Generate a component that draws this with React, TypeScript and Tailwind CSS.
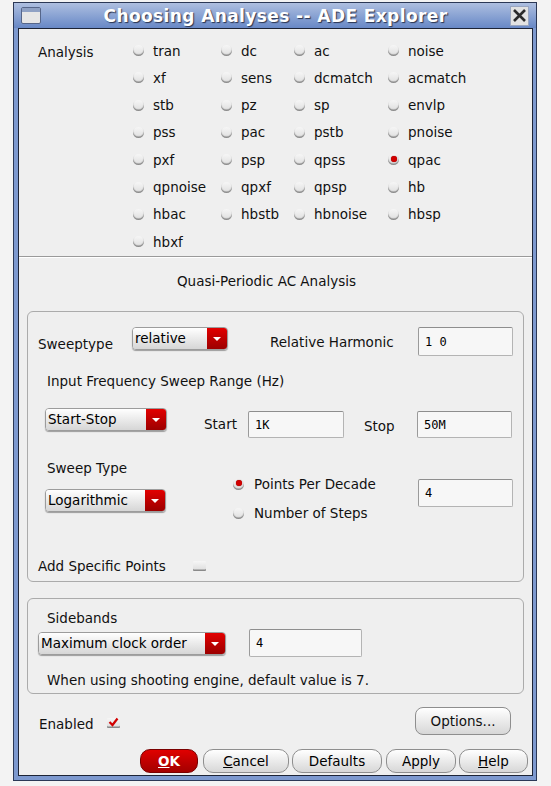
import React from 'react'

const analyses = [
  ['tran', 'dc', 'ac', 'noise'],
  ['xf', 'sens', 'dcmatch', 'acmatch'],
  ['stb', 'pz', 'sp', 'envlp'],
  ['pss', 'pac', 'pstb', 'pnoise'],
  ['pxf', 'psp', 'qpss', 'qpac'],
  ['qpnoise', 'qpxf', 'qpsp', 'hb'],
  ['hbac', 'hbstb', 'hbnoise', 'hbsp'],
  ['hbxf'],
]

function Radio({ on = false }: { on?: boolean }) {
  return (
    <div className="relative w-[11px] h-[11px] shrink-0 rounded-full bg-gradient-to-b from-[#f6f6f6] to-[#dedede] shadow-[inset_0_-1.5px_1px_#8a8a8a]">
      {on && (
        <div className="absolute left-[2.5px] top-[1.5px] w-[6px] h-[6px] rounded-full bg-[#d10000] shadow-[0_0_1px_#600]" />
      )}
    </div>
  )
}

function Dropdown({ label, w }: { label: string; w: string }) {
  return (
    <div
      className={`${w} h-[23px] flex rounded-[4px] border border-[#9c9c9c] shadow-[0_1px_1px_rgba(0,0,0,0.35)] overflow-hidden`}
    >
      <div className="flex-1 flex items-center pl-[2px] pb-[1px] bg-gradient-to-b from-[#ffffff] to-[#d6d6d6] text-black">
        {label}
      </div>
      <div className="w-[20px] flex items-center justify-center bg-gradient-to-b from-[#e20000] to-[#9c0000]">
        <div className="w-0 h-0 border-l-[4px] border-r-[4px] border-t-[4px] border-l-transparent border-r-transparent border-t-white" />
      </div>
    </div>
  )
}

function Field({ value, w, h = 'h-[28px]' }: { value: string; w: string; h?: string }) {
  return (
    <div
      className={`${w} ${h} flex items-center pl-[6px] rounded-[2px] border border-[#b4b4b4] border-t-[#8e8e8e] border-l-[#9a9a9a] bg-[#f7f7f7] font-['DejaVu_Sans_Mono',monospace] text-[12px] text-black`}
    >
      {value}
    </div>
  )
}

function Check({ on = false }: { on?: boolean }) {
  return (
    <div className="relative w-[13px] h-[10px] rounded-[1px] bg-gradient-to-b from-[#f6f6f6] to-[#dcdcdc] shadow-[inset_0_-1.5px_0_#8a8a8a]">
      {on && (
        <svg className="absolute left-[1px] top-[-1px]" width="11" height="10" viewBox="0 0 11 10">
          <path d="M1.5 5 L4.5 8 L9.5 1.5" fill="none" stroke="#d10000" strokeWidth="2.2" />
        </svg>
      )}
    </div>
  )
}

function Btn({ children, w, ml, red = false }: { children: React.ReactNode; w: string; ml: string; red?: boolean }) {
  return (
    <div
      className={`${w} ${ml} h-[24px] flex items-center justify-center rounded-[10px] border ${
        red
          ? 'border-[#7a0000] bg-gradient-to-b from-[#e00000] to-[#a30000] text-white font-bold'
          : 'border-[#8e8e8e] bg-gradient-to-b from-[#ffffff] to-[#d7d7d7] text-black'
      }`}
    >
      {children}
    </div>
  )
}

export default function App() {
  return (
    <div className="w-[551px] h-[786px] bg-[#f3f3f3] pt-[2px] pl-[13px] font-['DejaVu_Sans',sans-serif] text-[13.5px] text-[#111]">
      <div className="w-[524px] border border-[#2b3856] bg-[#7d99cf] flex flex-col">
        {/* title bar */}
        <div className="h-[25px] flex items-center px-[7px] bg-gradient-to-b from-[#aebfe0] to-[#6888c6]">
          <div className="w-[20px] h-[17px] rounded-[2px] border border-[#56668a] bg-[#e6e6e6] flex flex-col">
            <div className="h-[4px] bg-[#8fa1c4]" />
          </div>
          <div className="flex-1 text-center text-white font-bold text-[17px] leading-[20px] [text-shadow:1px_1px_1px_#2a3450] tracking-[0.4px]">
            Choosing Analyses -- ADE Explorer
          </div>
          <div className="w-[19px] h-[20px] bg-[#e2e2e2] border border-[#9aa6c0] flex items-center justify-center">
            <svg width="15" height="15" viewBox="0 0 15 15">
              <path d="M2 2 L13 13 M13 2 L2 13" stroke="#2a2a2a" strokeWidth="2.6" />
            </svg>
          </div>
        </div>

        {/* content */}
        <div className="ml-[4px] mr-[3px] mb-[4px] border border-[#1d2436] bg-[#efefef] flex flex-col pb-[2px]">
          {/* analysis radios */}
          <div className="h-[227px] pt-[8px] pl-[19px] flex">
            <div className="w-[95px] h-[27.3px] flex items-center pt-[2px]">Analysis</div>
            <div className="grid grid-cols-[88px_73px_94px_1fr] auto-rows-[27.3px]">
              {analyses.flatMap((row, r) =>
                row.map((name, c) => (
                  <div key={`${r}-${c}`} className="flex items-center gap-[9px]">
                    <Radio on={name === 'qpac'} />
                    <span>{name}</span>
                  </div>
                ))
              )}
            </div>
          </div>
          <div className="h-px bg-[#9a9a9a]" />
          <div className="h-px bg-[#ffffff]" />

          <div className="mt-[15px] leading-[16px] text-center pr-[18px]">Quasi-Periodic AC Analysis</div>

          {/* sweep box */}
          <div className="mt-[22px] mx-[8px] rounded-[6px] border border-[#ababab] pl-[10px] pr-[10px] pb-[7px] flex flex-col">
            <div className="mt-[15px] h-[29px] flex items-start">
              <div className="w-[94px] mt-[9px] leading-[16px]">Sweeptype</div>
              <Dropdown label="relative" w="w-[96px]" />
              <div className="ml-[42px] mt-[7px] leading-[16px]">Relative Harmonic</div>
              <div className="ml-auto">
                <Field value="1 0" w="w-[95px]" h="h-[29px]" />
              </div>
            </div>

            <div className="mt-[17px] ml-[9px] leading-[16px]">Input Frequency Sweep Range (Hz)</div>

            <div className="mt-[19px] h-[30px] flex items-start">
              <div className="ml-[7px]">
                <Dropdown label="Start-Stop" w="w-[122px]" />
              </div>
              <div className="ml-[37px] w-[44px] mt-[8px] leading-[16px]">Start</div>
              <div className="mt-[3px]">
                <Field value="1K" w="w-[96px]" h="h-[27px]" />
              </div>
              <div className="ml-[20px] w-[53px] mt-[10px] leading-[16px]">Stop</div>
              <div className="mt-[3px]">
                <Field value="50M" w="w-[95px]" h="h-[27px]" />
              </div>
            </div>

            <div className="mt-[22px] flex items-start">
              <div className="w-[128px] flex flex-col">
                <div className="ml-[9px] leading-[16px]">Sweep Type</div>
                <div className="ml-[7px] mt-[13px]">
                  <Dropdown label="Logarithmic" w="w-[121px]" />
                </div>
              </div>
              <div className="ml-[67px] mt-[16px] flex flex-col gap-[13px]">
                <div className="flex items-center gap-[10px] leading-[16px]">
                  <Radio on />
                  <span>Points Per Decade</span>
                </div>
                <div className="flex items-center gap-[10px] leading-[16px]">
                  <Radio />
                  <span>Number of Steps</span>
                </div>
              </div>
              <div className="ml-auto mt-[19px]">
                <Field value="4" w="w-[95px]" />
              </div>
            </div>

            <div className="mt-[37px] flex items-center leading-[16px]">
              <div className="w-[155px]">Add Specific Points</div>
              <Check />
            </div>
          </div>

          {/* sidebands box */}
          <div className="mt-[16px] mx-[8px] rounded-[6px] border border-[#ababab] pl-[10px] pb-[5px] flex flex-col">
            <div className="mt-[11px] ml-[9px] leading-[16px]">Sidebands</div>
            <div className="mt-[3px] flex items-start">
              <div className="mt-[3px]">
                <Dropdown label="Maximum clock order" w="w-[188px]" />
              </div>
              <div className="ml-[23px]">
                <Field value="4" w="w-[113px]" />
              </div>
            </div>
            <div className="mt-[15px] ml-[9px] leading-[16px]">When using shooting engine, default value is 7.</div>
          </div>

          {/* enabled + options */}
          <div className="mt-[13px] h-[28px] flex items-center pl-[20px] pr-[21px]">
            <div className="w-[68px] leading-[16px] mt-[5px]">Enabled</div>
            <div className="mt-[3px]">
              <Check on />
            </div>
            <div className="ml-auto w-[96px] h-[28px] flex items-center justify-center rounded-[8px] border border-[#8e8e8e] bg-gradient-to-b from-[#ffffff] to-[#d7d7d7]">
              Options...
            </div>
          </div>

          {/* bottom buttons */}
          <div className="mt-[14px] flex justify-end pr-[4px]">
            <Btn w="w-[58px]" ml="ml-0" red>
              <span className="underline">O</span>K
            </Btn>
            <Btn w="w-[86px]" ml="ml-[5px]">
              <span className="underline">C</span>ancel
            </Btn>
            <Btn w="w-[90px]" ml="ml-[3px]">Defaults</Btn>
            <Btn w="w-[70px]" ml="ml-[4px]">Apply</Btn>
            <Btn w="w-[69px]" ml="ml-[3px]">
              <span className="underline">H</span>elp
            </Btn>
          </div>
        </div>
      </div>
    </div>
  )
}
